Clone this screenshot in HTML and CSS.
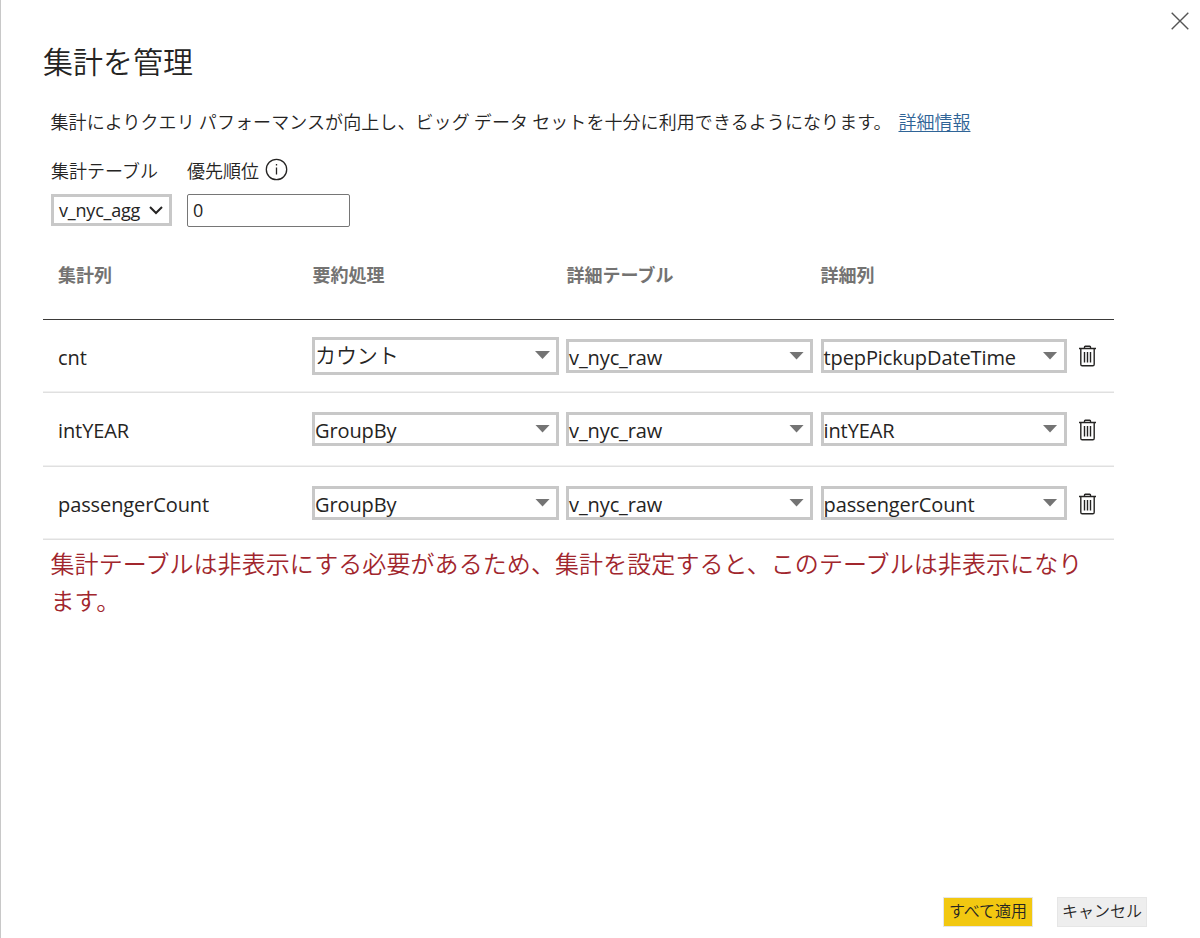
FILE: index.html
```html
<!DOCTYPE html>
<html lang="ja">
<head>
<meta charset="utf-8">
<title>集計を管理</title>
<link rel="stylesheet" href="styles.css">
</head>
<body>
<svg class="defs" aria-hidden="true">
  <symbol id="trash" viewBox="0 0 17 22">
    <path d="M0 3.5H17M5.5 3.5V2Q5.5 1.2 6.3 1.2H10.7Q11.5 1.2 11.5 2V3.5M1.8 3.5V19.2Q1.8 20.8 3.2 20.8H13.8Q15.2 20.8 15.2 19.2V3.5M5.5 7V17.5M8.5 7V17.5M11.5 7V17.5" fill="none" stroke="#252423" stroke-width="1.4"/>
  </symbol>
</svg>
<main class="dialog">
  <button class="close" aria-label="閉じる"><svg width="18" height="18" viewBox="0 0 18 18"><path d="M.7.7 17.3 17.3M17.3.7.7 17.3"/></svg></button>
  <h1 class="title">集計を管理</h1>
  <p class="intro"><span class="intro-text">集計によりクエリ パフォーマンスが向上し、ビッグ データ セットを十分に利用できるようになります。</span><a class="link">詳細情報</a></p>
  <div class="settings">
    <div class="field table-field">
      <label class="label">集計テーブル</label>
      <div class="table-select"><span>v_nyc_agg</span><svg width="14" height="9" viewBox="0 0 14 9"><path d="M1 1 7 7 13 1"/></svg></div>
    </div>
    <div class="field">
      <label class="label">優先順位<svg class="info" width="23" height="23" viewBox="0 0 23 23"><circle cx="11.5" cy="11.5" r="10.2"/><path d="M11.5 9.5V16.5M11.5 6V7.6"/></svg></label>
      <div class="number">0</div>
    </div>
  </div>
  <div class="grid">
    <div class="row head"><span>集計列</span><span>要約処理</span><span>詳細テーブル</span><span>詳細列</span></div>
    <div class="row first">
      <span class="name">cnt</span>
      <div class="drop tall"><span>カウント</span><i class="arrow"></i></div>
      <div class="drop"><span>v_nyc_raw</span><i class="arrow"></i></div>
      <div class="drop"><span>tpepPickupDateTime</span><i class="arrow"></i></div>
      <svg class="trash"><use href="#trash"/></svg>
    </div>
    <div class="row">
      <span class="name">intYEAR</span>
      <div class="drop"><span>GroupBy</span><i class="arrow"></i></div>
      <div class="drop"><span>v_nyc_raw</span><i class="arrow"></i></div>
      <div class="drop"><span>intYEAR</span><i class="arrow"></i></div>
      <svg class="trash"><use href="#trash"/></svg>
    </div>
    <div class="row last">
      <span class="name">passengerCount</span>
      <div class="drop"><span>GroupBy</span><i class="arrow"></i></div>
      <div class="drop"><span>v_nyc_raw</span><i class="arrow"></i></div>
      <div class="drop"><span>passengerCount</span><i class="arrow"></i></div>
      <svg class="trash"><use href="#trash"/></svg>
    </div>
  </div>
  <p class="warning">集計テーブルは非表示にする必要があるため、集計を設定すると、このテーブルは非表示になります。</p>
  <footer class="footer"><button class="btn primary">すべて適用</button><button class="btn">キャンセル</button></footer>
</main>
</body>
</html>
```
FILE: styles.css
```css
* { box-sizing: border-box; }
body { margin: 0; background: #fff; color: #252423; font-family: "Open Sans", "Noto Sans CJK JP", sans-serif; }
h1, p { margin: 0; }
button { font: inherit; color: inherit; margin: 0; }
.defs { position: absolute; width: 0; height: 0; }
.dialog { position: relative; display: flex; flex-direction: column; width: 1200px; height: 938px; padding: 39px 53px 11px 42px; border-left: 1px solid #c8c8c8; }
.close { position: absolute; left: 1170px; top: 12px; width: 18px; height: 18px; padding: 0; border: 0; background: none; }
.close svg { display: block; fill: none; stroke: #555; stroke-width: 1.4; }
.title { height: 42px; font: 350 30px/42px "Noto Sans CJK JP", sans-serif; }
.intro { display: flex; justify-content: space-between; width: 920px; height: 26px; margin: 27px 0 0 7.5px; font: 350 18px/26px "Noto Sans CJK JP", sans-serif; white-space: nowrap; }
.intro-text { letter-spacing: 0.08px; }
.link { color: #2f6497; text-decoration: underline; text-underline-offset: 2px; text-decoration-thickness: 1px; }
.settings { display: flex; gap: 15px; margin: 23px 0 0 8px; }
.label { display: flex; align-items: center; height: 26px; font: 350 18px/26px "Noto Sans CJK JP", sans-serif; }
.info { margin: -2px 0 0 6px; fill: none; stroke: #252423; stroke-width: 1.3; }
.table-field { width: 121px; }
.table-select { display: flex; align-items: center; justify-content: space-between; height: 32px; margin-top: 11px; padding: 0 6px 0 5px; border: 3px solid #c8c8c8; font-size: 18px; letter-spacing: -.2px; }
.table-select svg { fill: none; stroke: #252423; stroke-width: 2; }
.number { display: flex; align-items: center; width: 163px; height: 33px; margin-top: 11px; padding: 0 0 2px 5px; border: 1px solid #767676; border-radius: 2px; font-size: 18px; }
.grid { width: 1071px; margin-top: 23px; }
.row { display: grid; grid-template-columns: 254px 254px 254.5px 258px 17px; align-items: center; height: 74px; padding: 0 0 1px 15px; border-bottom: 1px solid #e0e0e0; box-shadow: inset 0 -1px #f0f0f0; font-size: 20px; letter-spacing: -.1px; }
.head { grid-template-columns: 254.5px 254px 254px 258px; height: 70px; align-items: start; padding-top: 11px; border-bottom: 1px solid #3b3a39; box-shadow: none; color: #747372; font: 700 18px/26px "Noto Sans CJK JP", sans-serif; letter-spacing: 0; }
.first { height: 73px; }
.last { height: 73px; padding-bottom: 0; }
.drop { display: flex; align-items: center; justify-content: space-between; width: 247px; height: 34px; padding: 3px 6px 0 0; border: 3px solid #c8c8c8; line-height: 28px; }
.first .drop { padding-top: 4px; }
.first .drop.tall { height: 38px; padding: 1px 6px 4px 0; font: 350 21px/28px "Noto Sans CJK JP", sans-serif; }
.drop:nth-child(4) { width: 246px; }
.name { padding-top: 2px; }
.first .name { padding-top: 3px; }
.arrow { width: 15px; height: 8px; margin-top: -4px; background: #747474; clip-path: polygon(0 0, 100% 0, 50% 100%); }
.tall .arrow { margin-top: 2px; }
.trash { width: 17px; height: 22px; margin-top: 1px; }
.warning { width: 1045px; margin: 4px 0 0 7.5px; color: #a1262d; font: 350 24px/37px "Noto Sans CJK JP", sans-serif; letter-spacing: .08px; }
.footer { display: flex; justify-content: flex-end; gap: 24px; margin-top: auto; }
.btn { width: 90px; height: 30px; padding: 0 0 4px; border: 1px solid #e6e6e6; background: #eee; font: 350 16px/24px "Noto Sans CJK JP", sans-serif; white-space: nowrap; }
.primary { background: #f2c811; }
```
